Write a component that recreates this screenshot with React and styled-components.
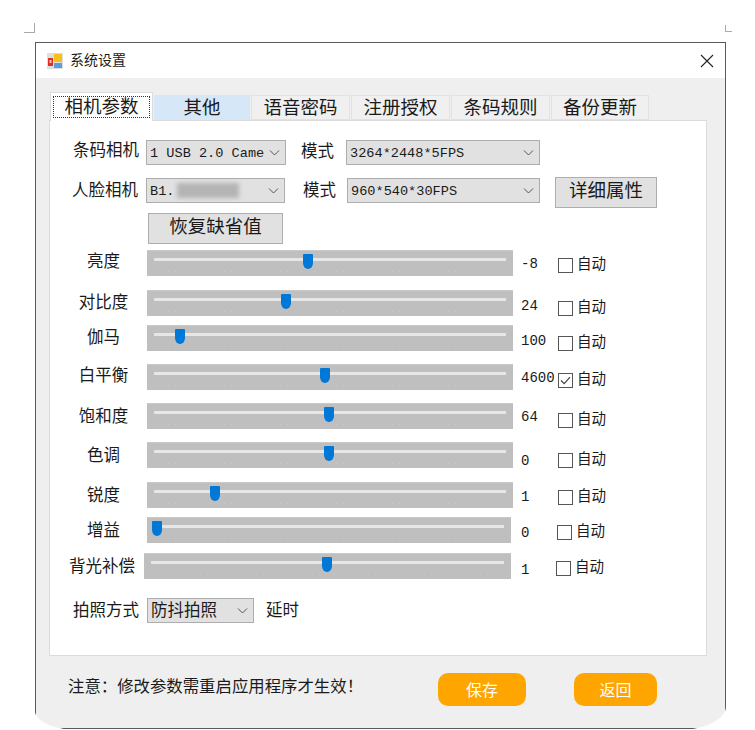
import styled, { createGlobalStyle } from "styled-components";

const GlobalStyle = createGlobalStyle`
  html, body {
    margin: 0;
    height: 730px;
    overflow: hidden;
    background: #fff;
  }
  * { box-sizing: border-box; }
`;

const cjk = `"Noto Sans CJK SC", "Liberation Sans", sans-serif`;
const mono = `"Liberation Mono", "Noto Sans CJK SC", monospace`;

// the dialog's controls are not evenly placed, so each row keeps its own nudges
const sliders = [
  { label: "亮度", value: "-8", thumb: 308, gap: 6, labelUp: 2, valueDrop: 1, boxDrop: 2 },
  { label: "对比度", value: "24", thumb: 286, gap: 14, labelUp: 1, valueDrop: 3, boxDrop: 5 },
  { label: "伽马", value: "100", thumb: 180, gap: 9, labelUp: 1, valueDrop: 3, boxDrop: 5 },
  { label: "白平衡", value: "4600", thumb: 325, gap: 13, labelUp: 2, valueDrop: 1, boxDrop: 3, auto: true },
  { label: "饱和度", value: "64", thumb: 329, gap: 13, labelUp: 0, valueDrop: 1, boxDrop: 4 },
  { label: "色调", value: "0", thumb: 329, gap: 13, labelUp: 0, valueDrop: 6, boxDrop: 5 },
  { label: "锐度", value: "1", thumb: 215, gap: 14, labelUp: 0, valueDrop: 2, boxDrop: 2 },
  { label: "增益", value: "0", thumb: 157, gap: 9, labelUp: 0, valueDrop: 3, boxDrop: 2, right: 511, boxX: 557 },
  { label: "背光补偿", value: "1", thumb: 327, gap: 10, labelUp: 0, valueDrop: 4, boxDrop: 2, left: 144, right: 511, boxX: 556 },
];

const Page = styled.div`
  width: 755px;
  height: 730px;
  font-family: ${cjk};
  color: #1a1a1a;
`;

const MarkRow = styled.div`
  display: flex;
  justify-content: space-between;
  height: 42px;
  padding: 23px 23px 0 24px;
`;

const Mark = styled.span`
  width: ${(p) => (p.$right ? 7 : 11)}px;
  height: ${(p) => (p.$right ? 7 : 10)}px;
  margin-top: ${(p) => (p.$right ? 2 : 0)}px;
  border-bottom: 1px solid #aaa;
  border-${(p) => (p.$right ? "left" : "right")}: 1px solid #aaa;
`;

const Window = styled.div`
  position: relative;
  width: 691px;
  height: 687px;
  margin-left: 35px;
  border: 1px solid #5a5a5a;
  display: flex;
  flex-direction: column;
  background: #efefef;

  /* the bottom corners of the capture are cut off in white */
  &::before, &::after {
    content: "";
    position: absolute;
    bottom: -2px;
  }
  &::before {
    left: -2px;
    width: 42px;
    height: 20px;
    background: radial-gradient(ellipse 42px 20px at 100% 0, transparent 97%, #fff 100%);
  }
  &::after {
    right: -2px;
    width: 45px;
    height: 25px;
    background: radial-gradient(ellipse 45px 25px at 0 0, transparent 97%, #fff 100%);
  }
`;

const TitleBar = styled.div`
  height: 35px;
  flex: none;
  background: #fff;
  display: flex;
  align-items: center;
  padding: 0 11px 0 11px;
  font-size: 14px;
`;

const TitleText = styled.span`
  margin: 0 0 3px 7px;
  flex: 1;
`;

const Body = styled.div`
  flex: 1;
  padding: 14px 18px 0 13px;
`;

const TabStrip = styled.div`
  display: flex;
  align-items: flex-end;
  height: 28px;
  padding-left: 1px;
  position: relative;
  z-index: 1;
`;

const Tab = styled.div`
  width: ${(p) => p.$width}px;
  height: ${(p) => (p.$active ? 29 : 25)}px;
  margin-bottom: ${(p) => (p.$active ? -1 : 0)}px;
  margin-right: 1px;
  display: flex;
  align-items: center;
  justify-content: center;
  font-size: 18.5px;
  line-height: 1;
  border: 1px solid ${(p) => (p.$active ? "#dcdcdc" : p.$hover ? "#d6e8f8" : "#e2e2e2")};
  border-bottom: ${(p) => (p.$active ? "none" : undefined)};
  background: ${(p) => (p.$active ? "#fff" : p.$hover ? "#d6e8f8" : "#f0f0f0")};
  padding: ${(p) => (p.$active ? "3px 2px 3px" : "0 0 3px")};
`;

const FocusBox = styled.div`
  width: 100%;
  height: 100%;
  border: 1px dotted #333;
  padding-bottom: 3px;
  display: flex;
  align-items: center;
  justify-content: center;
`;

const TabPage = styled.div`
  width: 658px;
  height: 536px;
  background: #fff;
  border: 1px solid #dcdcdc;
  padding-top: 19px;
`;

const ControlRow = styled.div`
  display: flex;
  align-items: center;
  height: 25px;
  margin-top: ${(p) => p.$gap || 0}px;
  padding-left: ${(p) => p.$indent || 0}px;
`;

const FieldLabel = styled.span`
  width: ${(p) => p.$width}px;
  flex: none;
  font-size: 16.5px;
  line-height: 1;
  white-space: nowrap;
  margin-left: ${(p) => p.$left || 0}px;
  margin-right: ${(p) => p.$right || 0}px;
  margin-bottom: ${(p) => (p.$up || 0) * 2}px;
`;

const Select = styled.div`
  width: ${(p) => p.$width}px;
  height: 25px;
  background: #e1e1e1;
  border: 1px solid #adadad;
  display: flex;
  align-items: center;
  padding: 0 5px 0 3px;
  white-space: nowrap;
  flex: none;
`;

const SelectText = styled.span`
  flex: 1;
  font-family: ${mono};
  font-size: 13.6px;
  margin-top: 1px;
`;

const SelectCjkText = styled.span`
  flex: 1;
  font-size: 16.5px;
  line-height: 1.2;
  margin-bottom: 2px;
`;

const HiddenName = styled.span`
  flex: none;
  font-family: ${mono};
  font-size: 13.6px;
  margin-top: 1px;
`;

const Blurred = styled.span`
  width: 62px;
  height: 15px;
  margin-left: 3px;
  margin-right: auto;
  background: #b4b4b4;
  filter: blur(2px);
`;

const GreyButton = styled.div`
  width: ${(p) => p.$width}px;
  height: 31px;
  flex: none;
  background: #e1e1e1;
  border: 1px solid #adadad;
  margin-left: ${(p) => p.$left || 0}px;
  margin-top: ${(p) => p.$top || 0}px;
  padding-bottom: 6px;
  display: flex;
  align-items: center;
  justify-content: center;
  font-size: 18.5px;
  line-height: 1;
`;

const SliderRow = styled.div`
  display: flex;
  align-items: center;
  height: 26px;
  margin-top: ${(p) => p.$gap}px;
`;

const SliderLabel = styled.span`
  width: ${(p) => p.$width}px;
  margin-left: 10px;
  margin-bottom: ${(p) => p.$up * 2 + 2}px;
  text-align: center;
  font-size: 16.5px;
  line-height: 1;
  white-space: nowrap;
  flex: none;
`;

const Slider = styled.div`
  position: relative;
  width: ${(p) => p.$width}px;
  height: 26px;
  flex: none;
  background: #bfbfbf;
  border-top: 1px solid #c9c9c9;
`;

const Track = styled.div`
  margin: 7px 7px 0;
  height: 3px;
  background: #e6e6e6;
`;

const Ticks = styled.div`
  margin: 10px 7px 0;
  height: 1px;
  background: repeating-linear-gradient(90deg, #c8c8c8 0 1px, transparent 1px 7px);
`;

const Thumb = styled.div`
  position: absolute;
  top: 3px;
  left: ${(p) => p.$left}px;
  width: 10px;
  height: 15px;
  background: #0078d7;
  border-radius: 1px 1px 5px 5px / 1px 1px 6px 6px;
`;

const Value = styled.span`
  width: ${(p) => p.$width}px;
  margin-left: ${(p) => p.$left}px;
  margin-top: ${(p) => p.$drop * 2}px;
  font-family: ${mono};
  font-size: 14px;
  flex: none;
  white-space: nowrap;
`;

const AutoBox = styled.div`
  display: flex;
  align-items: center;
  flex: none;
  margin-top: ${(p) => p.$drop * 2}px;
`;

const Box = styled.span`
  width: 15px;
  height: 15px;
  border: 1px solid #555;
  background: #fff;
  display: flex;
  flex: none;
`;

const AutoText = styled.span`
  margin: 0 0 4px 4px;
  font-size: 14.5px;
  line-height: 1;
`;

const Footer = styled.div`
  display: flex;
  align-items: center;
  padding: 17px 0 0 19px;
`;

const Note = styled.span`
  width: 370px;
  font-size: 16.4px;
  line-height: 1;
  margin-bottom: 8px;
  white-space: nowrap;
  flex: none;
`;

const OrangeButton = styled.div`
  width: ${(p) => p.$width}px;
  height: 33px;
  margin-right: ${(p) => p.$right || 0}px;
  padding-bottom: 2px;
  background: #ffa500;
  border-radius: 10px;
  color: #fff;
  font-size: 16px;
  line-height: 1;
  display: flex;
  align-items: center;
  justify-content: center;
`;

const Chevron = () => (
  <svg width="11" height="6" viewBox="0 0 11 6" fill="none" stroke="#555" strokeWidth="1">
    <path d="M1 0.5 L5.5 5 L10 0.5" />
  </svg>
);

const AppIcon = () => (
  <svg width="16" height="16" viewBox="0 0 16 16">
    <rect x="0" y="0" width="16" height="16" fill="#dedede" />
    <rect x="1" y="5" width="5" height="8" fill="#d8332a" />
    <rect x="2.5" y="7" width="2" height="3" fill="#f3b9a8" />
    <rect x="7" y="1" width="8" height="8" fill="#f4c01e" />
    <rect x="7" y="10" width="8" height="5" fill="#5b9be0" />
  </svg>
);

const CloseIcon = () => (
  <svg width="14" height="14" viewBox="0 0 14 14" fill="none" stroke="#222" strokeWidth="1.1">
    <path d="M1 1 L13 13 M13 1 L1 13" />
  </svg>
);

const CheckMark = () => (
  <svg width="13" height="13" viewBox="0 0 13 13" fill="none" stroke="#444" strokeWidth="1.2">
    <path d="M2 6.5 L5.2 9.6 L11 3.2" />
  </svg>
);

const SliderLine = ({ item }) => {
  const left = item.left || 147;
  const right = item.right || 513;
  const boxX = item.boxX || 558;
  return (
    <SliderRow $gap={item.gap}>
      <SliderLabel $width={left - 60} $up={item.labelUp}>{item.label}</SliderLabel>
      <Slider $width={right - left}>
        <Track />
        <Ticks />
        <Thumb $left={item.thumb - left - 5} />
      </Slider>
      <Value $left={521 - right} $width={boxX - 521} $drop={item.valueDrop}>{item.value}</Value>
      <AutoBox $drop={item.boxDrop}>
        <Box>{item.auto && <CheckMark />}</Box>
        <AutoText>自动</AutoText>
      </AutoBox>
    </SliderRow>
  );
};

export default function App() {
  return (
    <Page>
      <GlobalStyle />
      <MarkRow>
        <Mark />
        <Mark $right />
      </MarkRow>
      <Window>
        <TitleBar>
          <AppIcon />
          <TitleText>系统设置</TitleText>
          <CloseIcon />
        </TitleBar>
        <Body>
          <TabStrip>
            <Tab $width={103} $active>
              <FocusBox>相机参数</FocusBox>
            </Tab>
            <Tab $width={96} $hover>其他</Tab>
            <Tab $width={99}>语音密码</Tab>
            <Tab $width={99}>注册授权</Tab>
            <Tab $width={99}>条码规则</Tab>
            <Tab $width={98}>备份更新</Tab>
          </TabStrip>
          <TabPage>
            <ControlRow $indent={23}>
              <FieldLabel $width={65} $right={8} $up={3.5}>条码相机</FieldLabel>
              <Select $width={140}>
                <SelectText>1 USB 2.0 Came</SelectText>
                <Chevron />
              </Select>
              <FieldLabel $width={32} $left={15} $right={13} $up={2.5}>模式</FieldLabel>
              <Select $width={194}>
                <SelectText>3264*2448*5FPS</SelectText>
                <Chevron />
              </Select>
            </ControlRow>
            <ControlRow $indent={22} $gap={13}>
              <FieldLabel $width={65} $right={9} $up={1.5}>人脸相机</FieldLabel>
              <Select $width={139}>
                <HiddenName>B1.</HiddenName>
                <Blurred />
                <Chevron />
              </Select>
              <FieldLabel $width={32} $left={18} $right={12} $up={1.5}>模式</FieldLabel>
              <Select $width={193}>
                <SelectText>960*540*30FPS</SelectText>
                <Chevron />
              </Select>
              <GreyButton $width={102} $left={15} $top={4}>详细属性</GreyButton>
            </ControlRow>
            <GreyButton $width={135} $left={98} $top={10}>恢复缺省值</GreyButton>
            {sliders.map((item) => (
              <SliderLine key={item.label} item={item} />
            ))}
            <ControlRow $indent={23} $gap={19}>
              <FieldLabel $width={65} $right={9} $up={1.5}>拍照方式</FieldLabel>
              <Select $width={107}>
                <SelectCjkText>防抖拍照</SelectCjkText>
                <Chevron />
              </Select>
              <FieldLabel $width={36} $left={12} $up={1.5}>延时</FieldLabel>
            </ControlRow>
          </TabPage>
          <Footer>
            <Note>注意：修改参数需重启应用程序才生效！</Note>
            <OrangeButton $width={88} $right={48}>保存</OrangeButton>
            <OrangeButton $width={83}>返回</OrangeButton>
          </Footer>
        </Body>
      </Window>
    </Page>
  );
}
